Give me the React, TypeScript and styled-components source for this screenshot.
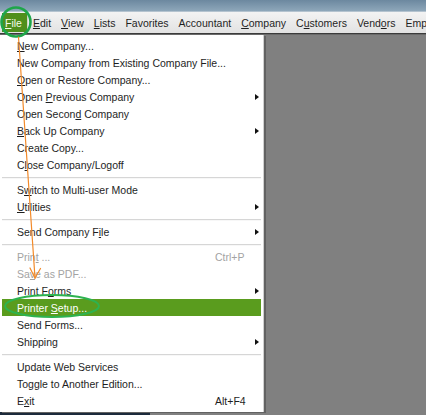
import React from "react";
import styled, { createGlobalStyle } from "styled-components";

const Global = createGlobalStyle`
  html, body { margin: 0; padding: 0; background: #808080; }
  body { font-family: "Liberation Sans", Arial, sans-serif; }
`;

const Screen = styled.div`
  position: relative;
  width: 426px;
  height: 415px;
  overflow: hidden;
  display: flex;
  flex-direction: column;
  background: #808080;
`;

const TitleBar = styled.div`
  height: 12px;
  flex: none;
  background: linear-gradient(#6c889f, #8ea7ba);
  border-bottom: 1px solid #b4c3cf;
  box-sizing: border-box;
`;

const MenuBar = styled.div`
  height: 22px;
  flex: none;
  box-sizing: border-box;
  display: flex;
  align-items: stretch;
  padding: 1px 0 1px 2px;
  background: linear-gradient(#f3f3f3, #e2e2e2);
  border-bottom: 1px solid #3b3b3b;
  font-size: 10.5px;
  color: #1f1f1f;
  white-space: nowrap;
`;

const BarItem = styled.div<{ $active?: boolean }>`
  display: flex;
  align-items: center;
  padding: ${(p) => (p.$active ? "0 5px 0 3px" : "0 5px")};
  background: ${(p) => (p.$active ? "#4f8f1c" : "transparent")};
  color: ${(p) => (p.$active ? "#f4fbe9" : "#1f1f1f")};
  border-right: ${(p) => (p.$active ? "1px solid #cfd8c4" : "none")};
`;

const Workspace = styled.div`
  flex: 1;
  display: flex;
  align-items: flex-end;
  background: #808080;
  box-shadow: inset 0 1px 0 #6a6a6a;
`;

const SideBar = styled.div`
  width: 150px;
  height: 6px;
  background: #1c2a3b;
`;

const Dropdown = styled.div`
  position: absolute;
  left: 0;
  top: 35px;
  width: 264px;
  box-sizing: border-box;
  padding: 2px 0 3px 0;
  background: #ffffff;
  border-right: 1px solid #d0d0d0;
  box-shadow: 2px 1px 0 #626262;
  font-size: 10.5px;
  white-space: nowrap;
`;

const Row = styled.div<{ $hot?: boolean; $disabled?: boolean }>`
  position: relative;
  height: 17px;
  margin: 0 2px;
  display: flex;
  align-items: center;
  padding-left: 15px;
  padding-right: 2px;
  background: ${(p) => (p.$hot ? "#5a9c1e" : "transparent")};
  color: ${(p) => (p.$hot ? "#ffffff" : p.$disabled ? "#a3a3a3" : "#1e1e1e")};
`;

const Label = styled.span`
  flex: 1;
`;

const Shortcut = styled.span`
  width: 36px;
  margin-right: 8px;
`;

const Arrow = styled.span`
  width: 0;
  height: 0;
  border-top: 3.5px solid transparent;
  border-bottom: 3.5px solid transparent;
  border-left: 4px solid #111;
`;

const Separator = styled.div`
  height: 8px;
  margin: 0 2px;
  display: flex;
  align-items: center;
  &::after {
    content: "";
    flex: 1;
    height: 1px;
    background: #d6d6d6;
    box-shadow: 0 1px 0 #f7f7f7;
  }
`;

const Annotations = styled.svg`
  position: absolute;
  left: 0;
  top: 0;
  pointer-events: none;
`;

type Item =
  | { sep: true }
  | {
      sep?: false;
      text: string;
      key?: number;
      sub?: boolean;
      shortcut?: string;
      disabled?: boolean;
      hot?: boolean;
    };

const items: Item[] = [
  { text: "New Company...", key: 0 },
  { text: "New Company from Existing Company File..." },
  { text: "Open or Restore Company...", key: 0 },
  { text: "Open Previous Company", key: 5, sub: true },
  { text: "Open Second Company", key: 10 },
  { text: "Back Up Company", key: 0, sub: true },
  { text: "Create Copy..." },
  { text: "Close Company/Logoff", key: 1 },
  { sep: true },
  { text: "Switch to Multi-user Mode", key: 1 },
  { text: "Utilities", key: 0, sub: true },
  { sep: true },
  { text: "Send Company File", key: 14, sub: true },
  { sep: true },
  { text: "Print ...", key: 4, shortcut: "Ctrl+P", disabled: true },
  { text: "Save as PDF...", key: 2, disabled: true },
  { text: "Print Forms", key: 7, sub: true },
  { text: "Printer Setup...", key: 8, hot: true },
  { text: "Send Forms..." },
  { text: "Shipping", key: 7, sub: true },
  { sep: true },
  { text: "Update Web Services" },
  { text: "Toggle to Another Edition..." },
  { text: "Exit", key: 1, shortcut: "Alt+F4" },
];

function Mnemonic({ text, at }: { text: string; at?: number }) {
  if (at === undefined) return <>{text}</>;
  return (
    <>
      {text.slice(0, at)}
      <u>{text[at]}</u>
      {text.slice(at + 1)}
    </>
  );
}

const bar: { text: string; key?: number }[] = [
  { text: "Edit", key: 0 },
  { text: "View", key: 0 },
  { text: "Lists", key: 0 },
  { text: "Favorites" },
  { text: "Accountant" },
  { text: "Company", key: 0 },
  { text: "Customers", key: 1 },
  { text: "Vendors", key: 4 },
  { text: "Employees" },
];

export default function App() {
  return (
    <>
      <Global />
      <Screen>
        <TitleBar />
        <MenuBar>
          <BarItem $active>
            <Mnemonic text="File" at={0} />
          </BarItem>
          {bar.map((b) => (
            <BarItem key={b.text}>
              <Mnemonic text={b.text} at={b.key} />
            </BarItem>
          ))}
        </MenuBar>
        <Workspace>
          <SideBar />
        </Workspace>

        <Dropdown>
          {items.map((it, i) =>
            it.sep ? (
              <Separator key={i} />
            ) : (
              <Row key={i} $hot={it.hot} $disabled={it.disabled}>
                <Label>
                  <Mnemonic text={it.text} at={it.key} />
                </Label>
                {it.shortcut && <Shortcut>{it.shortcut}</Shortcut>}
                {it.sub && <Arrow />}
              </Row>
            )
          )}
        </Dropdown>

        <Annotations width="426" height="415" viewBox="0 0 426 415">
          <circle cx="16" cy="22" r="14.5" fill="none" stroke="#1ea64a" strokeWidth="2.6" />
          <ellipse cx="52" cy="306" rx="47" ry="11" fill="none" stroke="#2db350" strokeWidth="2" />
          <g stroke="#f28a2a" strokeWidth="1.2" fill="none" strokeLinecap="round">
            <line x1="18.5" y1="37" x2="35" y2="278" />
            <line x1="35" y1="278" x2="30" y2="268" />
            <line x1="35" y1="278" x2="40.5" y2="268.5" />
          </g>
        </Annotations>
      </Screen>
    </>
  );
}
